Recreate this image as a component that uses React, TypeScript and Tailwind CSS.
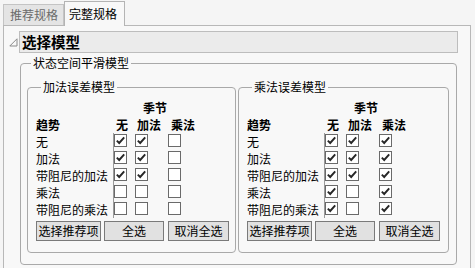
import React from "react";

// check state per trend row: [none, additive, multiplicative]
type Row = { label: string; checks: boolean[] };

const trends = ["无", "加法", "带阻尼的加法", "乘法", "带阻尼的乘法"];

const additiveRows: Row[] = [
    { label: trends[0], checks: [true, true, false] },
    { label: trends[1], checks: [true, true, false] },
    { label: trends[2], checks: [true, true, false] },
    { label: trends[3], checks: [false, false, false] },
    { label: trends[4], checks: [false, false, false] },
];

const multiplicativeRows: Row[] = [
    { label: trends[0], checks: [true, true, true] },
    { label: trends[1], checks: [true, true, true] },
    { label: trends[2], checks: [true, true, true] },
    { label: trends[3], checks: [true, false, true] },
    { label: trends[4], checks: [true, false, true] },
];

function CheckBox({ checked }: { checked: boolean }) {
    return (
        <div className="w-[13px] h-[13px] mt-[1px] border border-[#6a6a6a] bg-white flex items-center justify-center">
            {checked && (
                <svg width="11" height="11" viewBox="0 0 11 11">
                    <path d="M1.8 5.6 L4.2 8 L9.2 2.4" fill="none" stroke="#262626" strokeWidth="1.9" />
                </svg>
            )}
        </div>
    );
}

function ErrorModelBox({ title, rows, width }: { title: string; rows: Row[]; width: string }) {
    return (
        <fieldset className={`${width} border border-[#a9a9a9] rounded-[4px] pl-[8px] pt-[6px] pb-[11px]`}>
            <legend className="ml-[5px] px-[2px] leading-[14px] text-[12px] text-black">{title}</legend>
            <div className="grid grid-cols-[77px_21px_33px_30px] text-[12px] text-black">
                {/* header rows */}
                <div className="h-[17px]" />
                <div className="col-span-3 h-[17px] leading-[16px] text-center font-bold">季节</div>
                <div className="h-[16px] leading-[16px] font-bold">趋势</div>
                <div className="h-[16px] leading-[16px] font-bold pl-[3px]">无</div>
                <div className="h-[16px] leading-[16px] font-bold pl-[3px]">加法</div>
                <div className="h-[16px] leading-[16px] font-bold pl-[4px]">乘法</div>

                {rows.map((row) => (
                    <React.Fragment key={row.label}>
                        <div className="h-[17px] leading-[17px] whitespace-nowrap">{row.label}</div>
                        <div className="h-[17px] border-l border-[#9a9a9a]">
                            <CheckBox checked={row.checks[0]} />
                        </div>
                        <div className="h-[17px] pl-[1px]">
                            <CheckBox checked={row.checks[1]} />
                        </div>
                        <div className="h-[17px] pl-[1px]">
                            <CheckBox checked={row.checks[2]} />
                        </div>
                    </React.Fragment>
                ))}
            </div>

            {/* Buttons */}
            <div className="flex mt-[3px] text-[12px] text-black">
                <button className="w-[65px] h-[20px] leading-[18px] bg-[#e1e1e1] border border-[#7a7a7a] whitespace-nowrap">
                    选择推荐项
                </button>
                <button className="w-[60px] h-[20px] leading-[18px] ml-[3px] bg-[#e1e1e1] border border-[#7a7a7a]">
                    全选
                </button>
                <button className="w-[61px] h-[20px] leading-[18px] ml-[4px] bg-[#e1e1e1] border border-[#7a7a7a] whitespace-nowrap">
                    取消全选
                </button>
            </div>
        </fieldset>
    );
}

function App() {
    return (
        <div className="w-[475px] h-[268px] overflow-hidden bg-[#f5f5f5] font-['Noto_Sans_CJK_SC','Liberation_Sans',sans-serif] text-[12px]">
            {/* Tabs */}
            <div className="flex items-end h-[25px] pl-[3px] relative z-10">
                <div className="w-[61px] h-[21px] bg-[#e4e4e4] border border-b-0 border-[#c4c4c4] text-[#6b6b6b] leading-[19px] pl-[6px]">
                    推荐规格
                </div>
                <div className="w-[61px] h-[25px] -mb-px bg-[#f8f8f8] border border-b-0 border-[#b4b4b4] text-black leading-[24px] pl-[4px]">
                    完整规格
                </div>
            </div>

            {/* Main panel */}
            <div className="ml-[3px] w-[468px] h-[243px] border border-b-0 border-[#b8b8b8] bg-[#f8f8f8]">
                <div className="flex items-start mt-[5px]">
                    <svg width="9" height="9" viewBox="0 0 9 9" className="ml-[5px] mt-[7px]">
                        <path d="M8 0.8 L8 8 L0.8 8 Z" fill="none" stroke="#8a8a8a" strokeWidth="1" />
                    </svg>
                    <div className="ml-[1px] w-[439px] h-[22px] bg-[#ebebeb] border border-[#bdbdbd] pl-[2px] leading-[20px] text-[14.5px] font-bold text-black">
                        选择模型
                    </div>
                </div>

                <fieldset className="ml-[16px] mt-[3px] w-[437px] border border-[#a9a9a9] rounded-[4px] pl-[6px] pt-[10px] pb-[11px]">
                    <legend className="ml-[4px] px-[2px] leading-[14px] text-[12px] text-black">状态空间平滑模型</legend>
                    <div className="flex gap-[2px]">
                        <ErrorModelBox title="加法误差模型" rows={additiveRows} width="w-[209px]" />
                        <ErrorModelBox title="乘法误差模型" rows={multiplicativeRows} width="w-[211px]" />
                    </div>
                </fieldset>
            </div>
        </div>
    );
}

export default App;
